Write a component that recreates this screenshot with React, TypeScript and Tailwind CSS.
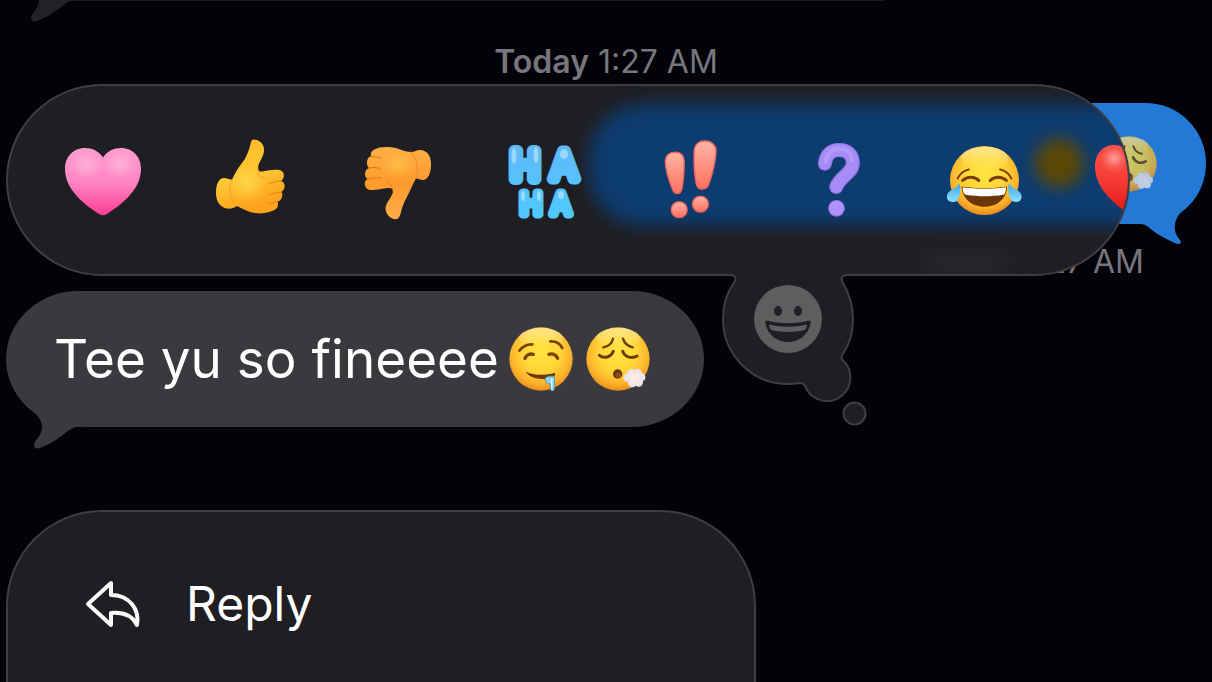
import type { ReactNode } from "react"

function Gradients() {
  return (
    <svg className="absolute h-0 w-0" aria-hidden="true">
      <defs>
        <radialGradient id="face" cx="0.5" cy="0.4" r="0.62">
          <stop offset="0" stopColor="#ffe640" />
          <stop offset="0.5" stopColor="#ffd437" />
          <stop offset="0.8" stopColor="#fcb02a" />
          <stop offset="1" stopColor="#e5851c" />
        </radialGradient>
        <linearGradient id="shine" x1="0" y1="0" x2="0" y2="1">
          <stop offset="0" stopColor="#fffbd2" stopOpacity="0.6" />
          <stop offset="1" stopColor="#fff3a0" stopOpacity="0" />
        </linearGradient>
        <linearGradient id="pink" x1="0" y1="0" x2="0" y2="1">
          <stop offset="0" stopColor="#ff9ccf" />
          <stop offset="0.5" stopColor="#ff86c3" />
          <stop offset="1" stopColor="#fb3d93" />
        </linearGradient>
        <linearGradient id="red" x1="0" y1="0" x2="0" y2="1">
          <stop offset="0" stopColor="#fb5349" />
          <stop offset="0.5" stopColor="#f63b34" />
          <stop offset="1" stopColor="#e01718" />
        </linearGradient>
        <radialGradient id="gloss">
          <stop offset="0" stopColor="#fff" stopOpacity="0.28" />
          <stop offset="1" stopColor="#fff" stopOpacity="0" />
        </radialGradient>
        <linearGradient id="thumb" x1="0" y1="0" x2="0.3" y2="1">
          <stop offset="0" stopColor="#ffb52a" />
          <stop offset="0.55" stopColor="#ffc934" />
          <stop offset="1" stopColor="#fda21c" />
        </linearGradient>
        <radialGradient id="thumbGlow">
          <stop offset="0" stopColor="#ffdc5a" stopOpacity="0.7" />
          <stop offset="1" stopColor="#ffdc5a" stopOpacity="0" />
        </radialGradient>
        <linearGradient id="thumbDown" x1="0" y1="0" x2="0" y2="1">
          <stop offset="0" stopColor="#ffb045" />
          <stop offset="0.5" stopColor="#ff9a2c" />
          <stop offset="1" stopColor="#ffac4c" />
        </linearGradient>
        <linearGradient id="aqua" x1="0" y1="0" x2="0" y2="1">
          <stop offset="0" stopColor="#5fb9f8" />
          <stop offset="1" stopColor="#4fc9ff" />
        </linearGradient>
        <linearGradient id="coral" x1="0" y1="0" x2="0" y2="1">
          <stop offset="0" stopColor="#ffb6a6" />
          <stop offset="1" stopColor="#ff6f60" />
        </linearGradient>
        <linearGradient id="tear" x1="0" y1="0" x2="0" y2="1">
          <stop offset="0" stopColor="#3fa9ea" />
          <stop offset="1" stopColor="#8fe0ff" />
        </linearGradient>
      </defs>
    </svg>
  )
}

const heartPath =
  "M38 9.5C34 3 27 0 20 0C8 0 0 9 0 21C0 42 20 57 34 66C37 67.6 39 67.6 42 66C56 57 76 42 76 21C76 9 68 0 56 0C49 0 42 3 38 9.5Z"

function PinkHeart() {
  return (
    <svg className="h-[68px] w-[76px] overflow-visible" viewBox="-1 -2 76 68">
      <path d={heartPath} fill="url(#pink)" />
      <ellipse cx="21" cy="17" rx="18" ry="14" fill="url(#gloss)" />
      <ellipse cx="55" cy="17" rx="18" ry="14" fill="url(#gloss)" />
    </svg>
  )
}

function RedHeart() {
  return (
    <svg className="h-[70px] w-[72px]" viewBox="0 0 76 68" preserveAspectRatio="none">
      <path d={heartPath} fill="url(#red)" />
      <ellipse cx="20" cy="15" rx="15" ry="13" fill="url(#gloss)" />
      <ellipse cx="20" cy="12" rx="11" ry="8" fill="url(#gloss)" />
      <ellipse cx="56" cy="15" rx="15" ry="13" fill="url(#gloss)" />
    </svg>
  )
}

function ThumbsUp() {
  return (
    <svg className="h-[76px] w-[70px] overflow-visible" viewBox="214 142 70 76">
      <path
        d="M251 142C251.500 139 254 139 257 140C262 142 264.500 146 264 151C263.500 157 258 163 258 168C258 171 260 172 263 171.500C268 170.500 274 169.500 279 170C284 170.500 286 177 281 181C286 182.500 285.500 189 281.500 192C283.500 195 282 200 277.500 202C279 206 277 210 272 211C267 213 260 214 255 213C248 212 243 209 237 206C234 208 231 209 227 208.500C220 207.500 216 201 216 193C216 184 219 178 224 178C228 178 229 180 232 179.500C235 173 238 168 242 163C246 158 249 151 251 142Z"
        fill="url(#thumb)"
      />
      <ellipse cx="248" cy="184" rx="17" ry="18" fill="url(#thumbGlow)" />
      <path
        d="M281 181C276 181.500 272 182 268 184M281.500 192C277 192.500 273 193 269 195M277.500 202C274 202 271 203 268 204"
        fill="none"
        stroke="#dd8a10"
        strokeWidth="1.300"
        strokeLinecap="round"
        opacity="0.7"
      />
      <path
        d="M232 179.500C228 188 230 200 237 206M258 168C257 173 260 177 264 178"
        fill="none"
        stroke="#f0981a"
        strokeWidth="1.500"
        strokeLinecap="round"
        opacity="0.5"
      />
    </svg>
  )
}

function ThumbsDown() {
  return (
    <svg className="h-[74px] w-[68px] overflow-visible" viewBox="362 143 68 74">
      <path
        d="M371 156C369 150 378 146.500 388 147C397 147 404 152 411 152C415 152 417 149.500 421 150C428 151 431.500 157 431 165C431 173 428 180 423 180C420 180 418 178 416 178.500C413 183 411 189 408 195C404 202 402 207 401 212C400 217 398 220 394 219C389 218 385.500 213 385.500 208C386 202 393 196 393 191C393 188.500 391 188 388 188C382 188.500 376 190.500 370 190C364 189 363 181 367.500 179C364 177 364 170 369 168C366 165 366 158 371 156Z"
        fill="url(#thumbDown)"
      />
      <ellipse cx="398" cy="165" rx="17" ry="13" fill="url(#thumbGlow)" opacity="0.6" />
      <path
        d="M371 156.500C375 156.500 378 157 381 158M369 168C373 167 377 167.500 380 168.500M367.500 179C372 177.500 377 178 381 178"
        fill="none"
        stroke="#d9701a"
        strokeWidth="1.300"
        strokeLinecap="round"
        opacity="0.7"
      />
      <path
        d="M411 152C418 160 419 171 416 178.500M393 191C393 186 390 183 386 182"
        fill="none"
        stroke="#e8802a"
        strokeWidth="1.500"
        strokeLinecap="round"
        opacity="0.5"
      />
    </svg>
  )
}

function HaHa() {
  return (
    <svg className="h-[96px] w-[80px] overflow-visible" viewBox="-4 -10 80 96">
      <text
        className="font-['Inter'] font-light"
        fill="url(#aqua)"
        stroke="url(#aqua)"
        strokeLinejoin="round"
        textAnchor="middle"
      >
        <tspan x="18" y="37" fontSize="38" strokeWidth="12">
          H
        </tspan>
        <tspan x="57" y="37" fontSize="38" strokeWidth="11">
          A
        </tspan>
        <tspan x="24" y="72" fontSize="29" strokeWidth="9">
          H
        </tspan>
        <tspan x="54" y="72" fontSize="28" strokeWidth="9">
          A
        </tspan>
      </text>
      <g fill="#d9f3ff" opacity="0.5">
        <ellipse cx="7" cy="14" rx="2.500" ry="8" />
        <ellipse cx="29" cy="13" rx="2.500" ry="8" />
        <ellipse cx="57" cy="12" rx="4" ry="5" />
        <ellipse cx="16" cy="54" rx="2" ry="5" />
        <ellipse cx="32" cy="54" rx="2" ry="5" />
        <ellipse cx="54" cy="53" rx="3" ry="4" />
      </g>
    </svg>
  )
}

function Exclaim() {
  return (
    <svg className="h-[81px] w-[55px] overflow-visible" viewBox="67 61 164 244">
      <g fill="url(#coral)" stroke="#f0645a" strokeWidth="4">
        <path d="M76 126C76 108 88 98 105 98C122 98 133 108 133 126C133 160 130 190 126 208C122 227 104 227 98 210C88 186 77 160 76 126Z" />
        <path d="M163 92C165 74 178 63 197 64C217 65 230 78 229 96C227 130 216 170 207 194C200 213 176 213 171 198C164 176 162 130 163 92Z" />
        <circle cx="118" cy="271" r="24" />
        <circle cx="182" cy="254" r="24" />
      </g>
    </svg>
  )
}

function Question() {
  return (
    <svg className="h-[75px] w-[43px] overflow-visible" viewBox="525 67 128 225">
      <g fill="none" strokeLinecap="round">
        <path d="M554 129C558 100 574 88 598 88C624 88 638 104 638 127C638 158 600 166 588 199" stroke="#9478ea" strokeWidth="42" />
        <path d="M554 129C558 100 574 88 598 88C624 88 638 104 638 127C638 158 600 166 588 199" stroke="#a78bf6" strokeWidth="34" />
        <path d="M556 122C561 97 576 84 598 84C620 84 634 97 636 120" stroke="#c3aafb" strokeWidth="12" opacity="0.5" />
      </g>
      <circle cx="589" cy="263" r="25" fill="#9478ea" />
      <circle cx="589" cy="262" r="22" fill="#ae92f8" />
    </svg>
  )
}

function Joy() {
  return (
    <svg className="h-[73px] w-[78px]" viewBox="75 190 235 218">
      <circle cx="194" cy="299" r="104" fill="url(#face)" />
      <ellipse cx="194" cy="232" rx="72" ry="34" fill="url(#shine)" />
      <g fill="none" stroke="#7a3d08" strokeLinecap="round">
        <path d="M113 293C120 279 132 269 147 266M241 266C256 269 268 279 275 293" strokeWidth="6" />
        <path d="M128 299C142 286 164 286 177 299M211 299C224 286 246 286 260 299" strokeWidth="9" />
      </g>
      <path d="M125 317C170 324 218 324 262 317C262 352 233 378 194 378C155 378 126 352 125 317Z" fill="#6d3609" />
      <path d="M128 319C170 325 218 325 259 319C259 332 256 339 251 342C212 348 176 348 137 342C131 338 128 331 128 319Z" fill="#fff" />
      <path d="M120 308C122 335 122 364 97 364C78 362 76 343 88 332C98 324 110 320 120 308Z" fill="url(#tear)" />
      <path d="M266 308C265 335 266 364 290 364C309 362 310 343 298 332C288 324 276 320 266 308Z" fill="url(#tear)" />
    </svg>
  )
}

function Drool() {
  return (
    <svg className="size-16 shrink-0" viewBox="86 110 192 192">
      <circle cx="182" cy="206" r="95" fill="url(#face)" />
      <ellipse cx="182" cy="143" rx="66" ry="30" fill="url(#shine)" />
      <g fill="none" stroke="#7a4108" strokeLinecap="round">
        <path d="M117 181C127 168 140 161 156 162M210 153C226 152 239 160 246 173" strokeWidth="8" />
        <path d="M134 204C138 194 148 189 159 192M206 192C217 188 227 194 232 204" strokeWidth="10" />
      </g>
      <path d="M137 244C160 256 196 256 224 247C228 264 204 268 184 266C160 264 143 256 137 244Z" fill="#6e370a" />
      <path
        d="M195 263C204 257 215 256 222 260C224 274 222 288 221 299C218 304 211 303 210 297C211 288 210 280 207 278C204 284 197 280 195 263Z"
        fill="#8ed6ee"
        stroke="#4e9db4"
        strokeWidth="3"
      />
      <path d="M214 266V292" stroke="#e4faff" strokeWidth="4" strokeLinecap="round" />
    </svg>
  )
}

function Exhale({ className }: { className: string }) {
  return (
    <svg className={className} viewBox="319 110 192 192">
      <circle cx="415" cy="206" r="95" fill="url(#face)" />
      <ellipse cx="415" cy="143" rx="66" ry="30" fill="url(#shine)" />
      <g fill="none" stroke="#6e3c0a" strokeLinecap="round">
        <path d="M371 171C386 168 397 158 400 145M430 145C434 158 444 168 459 171" strokeWidth="7" />
        <path d="M359 195C372 205 394 202 401 183M429 183C436 202 458 206 472 197" strokeWidth="9" />
      </g>
      <circle cx="414" cy="251" r="14" fill="#6e370a" />
      <circle cx="416" cy="254" r="8" fill="#8f4d12" />
      <g fill="#ece6ea">
        <circle cx="444" cy="262" r="13" />
        <circle cx="456" cy="249" r="13" />
        <circle cx="473" cy="248" r="13" />
        <circle cx="485" cy="261" r="12" />
        <circle cx="477" cy="276" r="13" />
        <circle cx="458" cy="278" r="13" />
      </g>
      <circle cx="464" cy="263" r="16" fill="#fbe9e2" />
    </svg>
  )
}

const reactions: { label: string; icon: ReactNode }[] = [
  { label: "Heart", icon: <PinkHeart /> },
  { label: "Thumbs up", icon: <ThumbsUp /> },
  { label: "Thumbs down", icon: <ThumbsDown /> },
  { label: "Ha ha", icon: <HaHa /> },
  { label: "Emphasize", icon: <Exclaim /> },
  { label: "Question", icon: <Question /> },
  { label: "Tears of joy", icon: <Joy /> },
  { label: "Red heart", icon: <RedHeart /> },
]

function IncomingTail({ className }: { className: string }) {
  return (
    <svg className={className} viewBox="0 0 54 45" aria-hidden="true">
      <path
        d="M0 0C8 8 15 13 15 22C15 31 7 35 7 40C7 43 9 44 13 43C25 39 34 31 41 26C45 23 48 21.500 54 21.500V0Z"
        fill="currentColor"
      />
    </svg>
  )
}

function ReactionBubble() {
  return (
    <button type="button" aria-label="Add emoji reaction" className="absolute top-[186px] left-[720px] z-20">
      <svg className="h-[160px] w-[150px]" viewBox="720 270 150 160">
        <path
          d="M731 275C735 275 736.500 278 734.500 282C727 292 723 306 723 319A65 65 0 0 0 788 384C793 384 797 383.500 801 383C804 383 805 386 807 390A23.500 23.500 0 1 0 842 359.500C841 357 842 355 843.500 353C850 343 853 331 853 319C853 306 849 293 842.500 282C840.500 278 842 275 846 275V270H731Z"
          fill="#1f1e22"
        />
        <path
          d="M730 275C735 275 736.500 278 734.500 282C727 292 723 306 723 319A65 65 0 0 0 788 384C793 384 797 383.500 801 383C804 383 805 386 807 390A23.500 23.500 0 1 0 842 359.500C841 357 842 355 843.500 353C850 343 853 331 853 319C853 306 849 293 842.500 282C840.500 278 842 275 847 275"
          fill="none"
          stroke="#3f3e43"
          strokeWidth="2"
        />
        <circle cx="854.500" cy="413.500" r="11" fill="#1f1e22" stroke="#3f3e43" strokeWidth="2" />
        <circle cx="788" cy="319" r="34" fill="#5e5e60" />
        <ellipse cx="778" cy="311" rx="4" ry="5" fill="#1f1e22" />
        <ellipse cx="798" cy="311" rx="4" ry="5" fill="#1f1e22" />
        <path
          d="M767 320.500C781 324 795 324 809 320.500C811 320.500 811 322 810.500 324C808 335 799 342 788 342C777 342 768 335 765.500 324C765 322 765 320.500 767 320.500Z"
          fill="#1f1e22"
        />
        <path d="M769 324.500C782 327.500 794 327.500 807 324.500C806.500 327 806 328.500 805 330C794 332.500 782 332.500 771 330C770 328.500 769.500 327 769 324.500Z" fill="#5e5e60" />
      </svg>
    </button>
  )
}

export default function App() {
  return (
    <main className="flex h-screen flex-col overflow-hidden bg-[#030208] font-['Inter',sans-serif]">
      <Gradients />

      <header className="relative h-[84px] shrink-0">
        <div className="ml-16 h-px w-[820px] bg-[#1d1c21]" />
        <IncomingTail className="absolute -top-[22px] left-6 h-[45px] w-[54px] text-[#232227]" />
        <p className="pt-10 text-center text-[32px] leading-[42px] text-[#77767c]">
          <span className="font-semibold">Today</span> 1:27 AM
        </p>
      </header>

      <section className="relative shrink-0 pr-[82px] pl-1.5">
        <div className="absolute top-[19px] right-1.5 flex h-[121px] w-[500px] items-center justify-end rounded-full bg-[#2579d6] pr-[49px]">
          <Exhale className="size-14 opacity-75" />
          <svg className="absolute right-[21px] bottom-[-21px] h-[42px] w-[52px]" viewBox="1133 203 52 42" aria-hidden="true">
            <path
              d="M1133 224H1140C1146 224 1148 227 1152 230C1160 236 1168 240 1176 243.500C1180 245 1182 243 1180 240C1176 235 1174 231 1175 224C1176 218 1179 214 1185 208L1180 203H1133Z"
              fill="#2579d6"
            />
          </svg>
        </div>
        <p className="absolute top-[157px] right-[68px] text-[32px] leading-[42px] text-[#77767c]">
          <span className="font-semibold">Read</span> 1:27 AM
        </p>

        <div className="relative z-10 flex h-48 overflow-hidden rounded-full border-2 border-[#3f3e43] bg-[#1f1e22] pl-5">
          <div className="absolute top-[18px] right-[-60px] h-[122px] w-[600px] rounded-[56px] bg-[#0d3c70] blur-[9px]" />
          <div className="absolute top-[52px] right-[44px] size-[50px] rounded-full bg-[#5a4706] blur-[8px]" />
          <div className="absolute top-[162px] right-[122px] h-7 w-[80px] bg-[#38373b] opacity-30 blur-[8px]" />
          {reactions.map((reaction) => (
            <button
              key={reaction.label}
              type="button"
              aria-label={reaction.label}
              className="relative flex w-[147px] shrink-0 items-center justify-center"
            >
              {reaction.icon}
            </button>
          ))}
        </div>
        <ReactionBubble />
      </section>

      <section className="mt-[15px] shrink-0 pl-1.5">
        <div className="relative flex h-[136px] w-[698px] items-center rounded-[72px/68px] bg-[#3a393d] pl-12 text-white">
          <p className="flex items-center text-[53px] leading-[70px] whitespace-nowrap">
            Tee yu so fineeee
            <span className="ml-2.5 flex gap-[13px]">
              <Drool />
              <Exhale className="size-16 shrink-0" />
            </span>
          </p>
          <IncomingTail className="absolute top-[114px] left-[21px] h-[45px] w-[54px] text-[#3a393d]" />
        </div>
      </section>

      <nav className="mt-[83px] ml-1.5 w-[750px] flex-1 rounded-t-[96px] border-2 border-b-0 border-[#3f3e43] bg-[#1f1e22] pt-[58px]">
        <button type="button" className="flex items-center gap-11 pl-[76px] text-white">
          <svg className="h-[50px] w-[58px]" viewBox="84 579 58 50" fill="none" stroke="#fafafa" strokeWidth="4" strokeLinejoin="round" aria-hidden="true">
            <path d="M111 583L88 604L111 625V613C123 612 132 615 137 625C140 609 129 595 111 595Z" />
          </svg>
          <span className="text-[48px] leading-[68px]">Reply</span>
        </button>
      </nav>
    </main>
  )
}
